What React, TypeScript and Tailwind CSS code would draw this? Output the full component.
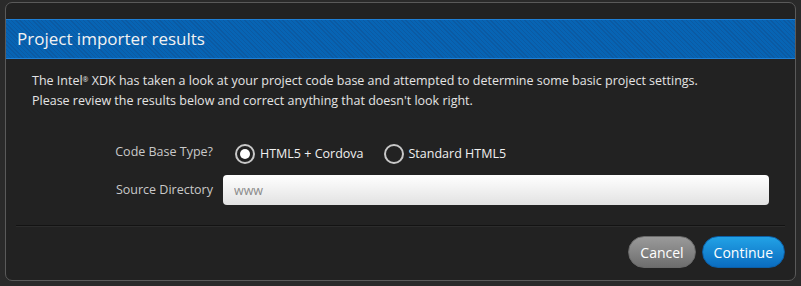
import { useState } from 'react'

export default function App() {
  const [type, setType] = useState<'cordova' | 'standard'>('cordova')

  const radio = (on: boolean) => (
    <span className="w-[20px] h-[20px] rounded-full border-2 border-[#c8c8c8] flex items-center justify-center shrink-0">
      {on && <span className="w-[10px] h-[10px] rounded-full bg-white" />}
    </span>
  )

  return (
    <div
      className="w-[801px] h-[286px] bg-[#2a2a2a] pt-[2px] pl-[5px] overflow-hidden"
      style={{ fontFamily: '"Open Sans", "Noto Sans", sans-serif' }}
    >
      <div className="w-[791px] h-[279px] bg-[#222222] border border-[#5a5a5a] rounded-[7px] flex flex-col">
        {/* Header */}
        <div
          className="mt-[16px] h-[40px] border-y border-[#1e7fd6] flex items-center pl-[11px] pb-[1px] text-[17px] text-[#f2f2f2]"
          style={{
            background:
              'repeating-linear-gradient(45deg, #0b5aa3 0px, #0b5aa3 1px, #0764b4 1px, #0764b4 3px)',
          }}
        >
          Project importer results
        </div>

        {/* Body */}
        <div className="pl-[26px] pt-[12px] text-[12.5px] leading-[20px] text-[#e4e4e4]">
          <p>
            The Intel<sup className="text-[7px]">®</sup> XDK has taken a look at your project code base and attempted to determine some basic project settings.
          </p>
          <p>Please review the results below and correct anything that doesn't look right.</p>
        </div>

        <div className="mt-[31px] flex flex-col gap-[9px] text-[12.5px]">
          <div className="flex items-center h-[24px]">
            <div className="w-[207px] text-right text-[#c9c9c9] -mt-[3px]">Code Base Type?</div>
            <div className="flex items-center ml-[22px] gap-[5px] text-[#f0f0f0] cursor-pointer" onClick={() => setType('cordova')}>
              {radio(type === 'cordova')}
              <span>HTML5 + Cordova</span>
            </div>
            <div className="flex items-center ml-[20px] gap-[5px] text-[#f0f0f0] cursor-pointer" onClick={() => setType('standard')}>
              {radio(type === 'standard')}
              <span>Standard HTML5</span>
            </div>
          </div>
          <div className="flex items-center h-[30px]">
            <div className="w-[207px] text-right text-[#c9c9c9]">Source Directory</div>
            <input
              placeholder="www"
              className="ml-[10px] w-[546px] h-[30px] rounded-[4px] px-[11px] text-[12.5px] text-[#333] placeholder:text-[#8a8a8a] outline-none"
              style={{ background: 'linear-gradient(#ffffff, #e2e2e2)' }}
            />
          </div>
        </div>

        <div className="mx-[10px] mt-[20px] h-[2px] border-t border-[#131313] border-b border-b-[#2c2c2c]" />

        <div className="flex justify-end gap-[6px] pr-[10px] mt-[9px]">
          <button
            className="h-[32px] px-[11px] rounded-full text-[14px] text-white border border-[#6a6a6a]"
            style={{ background: 'linear-gradient(#9a9a9a, #6e6e6e)' }}
          >
            Cancel
          </button>
          <button
            className="h-[32px] px-[11px] rounded-full text-[14px] text-white border border-[#0c5fa6]"
            style={{ background: 'linear-gradient(#22a2e6, #0a6cc0)' }}
          >
            Continue
          </button>
        </div>
      </div>
    </div>
  )
}
